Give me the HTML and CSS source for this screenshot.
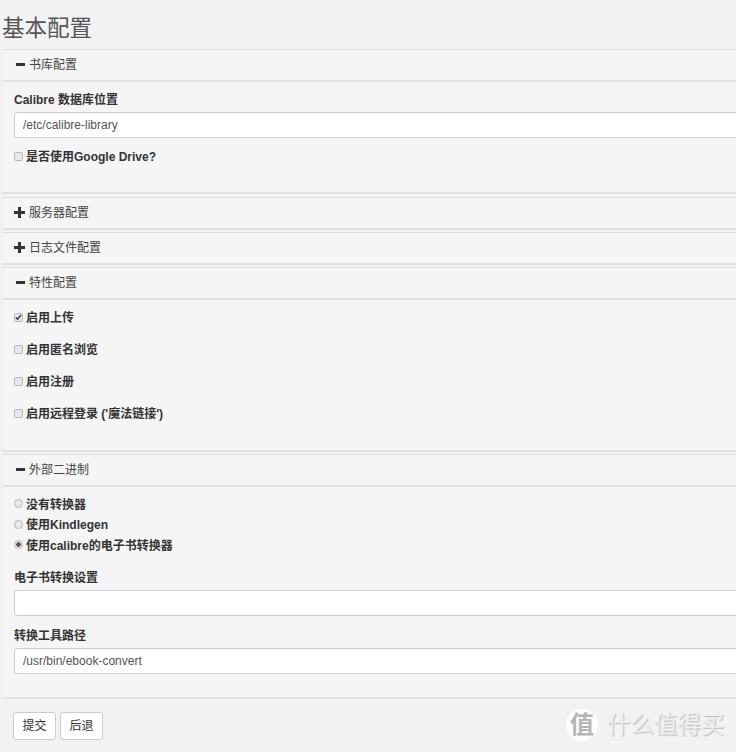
FILE: index.html
```html
<!DOCTYPE html>
<html lang="zh-CN">
<head>
  <meta charset="UTF-8" />
  <meta name="viewport" content="width=device-width, initial-scale=1.0"/>
  <title>基本配置</title>
  <link rel="stylesheet" href="styles.css">
</head>
<body>
  <div class="container">
    <h2>基本配置</h2>
    <form>
      <div class="panel panel-library">
        <div class="panel-heading">
          <svg class="icon" viewBox="0 0 11 11"><rect x="2" y="4" width="9" height="3"/></svg>
          <span>书库配置</span>
        </div>
        <div class="panel-body body-library">
          <label class="field-label">Calibre 数据库位置</label>
          <input class="form-control" type="text" value="/etc/calibre-library">
          <label class="check-row drive-row"><input type="checkbox">是否使用Google Drive?</label>
        </div>
      </div>

      <div class="panel">
        <div class="panel-heading">
          <svg class="icon" viewBox="0 0 11 11"><path d="M4 0h3v4h4v3H7v4H4V7H0V4h4z"/></svg>
          <span>服务器配置</span>
        </div>
      </div>

      <div class="panel">
        <div class="panel-heading">
          <svg class="icon" viewBox="0 0 11 11"><path d="M4 0h3v4h4v3H7v4H4V7H0V4h4z"/></svg>
          <span>日志文件配置</span>
        </div>
      </div>

      <div class="panel">
        <div class="panel-heading">
          <svg class="icon" viewBox="0 0 11 11"><rect x="2" y="4" width="9" height="3"/></svg>
          <span>特性配置</span>
        </div>
        <div class="panel-body body-features">
          <label class="check-row"><input type="checkbox" checked>启用上传</label>
          <label class="check-row"><input type="checkbox">启用匿名浏览</label>
          <label class="check-row"><input type="checkbox">启用注册</label>
          <label class="check-row"><input type="checkbox">启用远程登录 ('魔法链接')</label>
        </div>
      </div>

      <div class="panel">
        <div class="panel-heading">
          <svg class="icon" viewBox="0 0 11 11"><rect x="2" y="4" width="9" height="3"/></svg>
          <span>外部二进制</span>
        </div>
        <div class="panel-body body-binaries">
          <label class="radio-row"><input type="radio" name="converter">没有转换器</label>
          <label class="radio-row"><input type="radio" name="converter">使用Kindlegen</label>
          <label class="radio-row"><input type="radio" name="converter" checked>使用calibre的电子书转换器</label>
          <label class="field-label settings-label">电子书转换设置</label>
          <input class="form-control" type="text">
          <label class="field-label path-label">转换工具路径</label>
          <input class="form-control" type="text" value="/usr/bin/ebook-convert">
        </div>
      </div>

      <div class="actions">
        <button type="button">提交</button>
        <button type="button">后退</button>
      </div>
    </form>
  </div>

  <div class="watermark">
    <span class="watermark-logo">值</span>
    <span class="watermark-text">什么值得买</span>
  </div>
</body>
</html>
```

FILE: styles.css
```css
html, body {
  overflow: hidden;
}

body {
  font-family: "Liberation Sans", "Noto Sans CJK SC", sans-serif;
  font-size: 12px;
  line-height: 17px;
  color: #333;
  background-color: #f2f2f2;
  margin: 0;
  height: 752px;
}

.container {
  width: 900px;
  padding-left: 2px;
}

h2 {
  font-size: 22.5px;
  font-weight: 400;
  line-height: 26px;
  color: #555;
  margin: 0;
  padding: 16px 0 7px;
}

.panel {
  background-color: #f5f5f5;
  border-top: 1px solid #ddd;
  border-left: 1px solid #ececec;
  border-bottom: 2px solid #e2e2e2;
  margin-bottom: 2px;
}

.panel-library {
  margin-bottom: 3px;
}

.panel-heading {
  display: flex;
  align-items: center;
  height: 30px;
  padding-left: 11px;
  gap: 4px;
  color: #444;
}

.panel-body {
  border-top: 2px solid #e2e2e2;
  padding-left: 11px;
}

.icon {
  width: 11px;
  height: 11px;
  margin-bottom: 2px;
  fill: #333;
}

.field-label {
  display: block;
  font-weight: 700;
  margin-bottom: 3px;
}

.form-control {
  display: block;
  width: 100%;
  height: 26px;
  box-sizing: border-box;
  padding: 0 8px;
  font: inherit;
  color: #555;
  background-color: white;
  border: 1px solid #ccc;
  border-radius: 3px;
}

.check-row,
.radio-row {
  display: flex;
  align-items: center;
  font-weight: 700;
}

.check-row input,
.radio-row input {
  appearance: none;
  width: 9px;
  height: 9px;
  margin: 0 3px 3px 0;
  border: 1px solid #b8b8b8;
  background-color: #e8e8e8;
  box-sizing: border-box;
}

.check-row input {
  border-radius: 2px;
}

.check-row input:checked {
  background-image: url("data:image/svg+xml,%3Csvg xmlns='http://www.w3.org/2000/svg' viewBox='0 0 8 8'%3E%3Cpath d='M1 4l2 2 4-5' fill='none' stroke='%23333' stroke-width='1.6'/%3E%3C/svg%3E");
  background-size: 7px 7px;
  background-position: center;
  background-repeat: no-repeat;
}

.radio-row input {
  border-radius: 50%;
}

.radio-row input:checked {
  background-image: radial-gradient(circle, #555 0, #555 2px, #e8e8e8 2.5px);
}

.body-library {
  padding-top: 10px;
  padding-bottom: 26px;
}

.drive-row {
  margin-top: 11px;
}

.body-features {
  padding-top: 10px;
  padding-bottom: 12px;
}

.body-features .check-row {
  margin-bottom: 15px;
}

.body-binaries {
  padding-top: 9.75px;
  padding-bottom: 23px;
}

.radio-row {
  margin-bottom: 3.5px;
}

.settings-label {
  margin-top: 15.25px;
}

.path-label {
  margin-top: 12px;
}

.actions {
  display: flex;
  gap: 4px;
  padding: 11px 0 0 11px;
}

button {
  width: 43px;
  height: 28px;
  padding: 0;
  font: inherit;
  color: #333;
  background-color: white;
  border: 1px solid #ccc;
  border-radius: 3px;
}

/* site stamp laid over the page corner */
.watermark {
  position: absolute;
  left: 566px;
  top: 709px;
  display: flex;
  align-items: center;
  gap: 9px;
  color: #eee;
  text-shadow: 1px 1px 1px #bbb;
}

.watermark-logo {
  width: 32px;
  height: 32px;
  border-radius: 50%;
  background-color: #fdfdfd;
  color: #b4b4b4;
  text-shadow: none;
  font-size: 24px;
  font-weight: 700;
  line-height: 31px;
  text-align: center;
}

.watermark-text {
  font-size: 23.5px;
  line-height: 32px;
}
```
